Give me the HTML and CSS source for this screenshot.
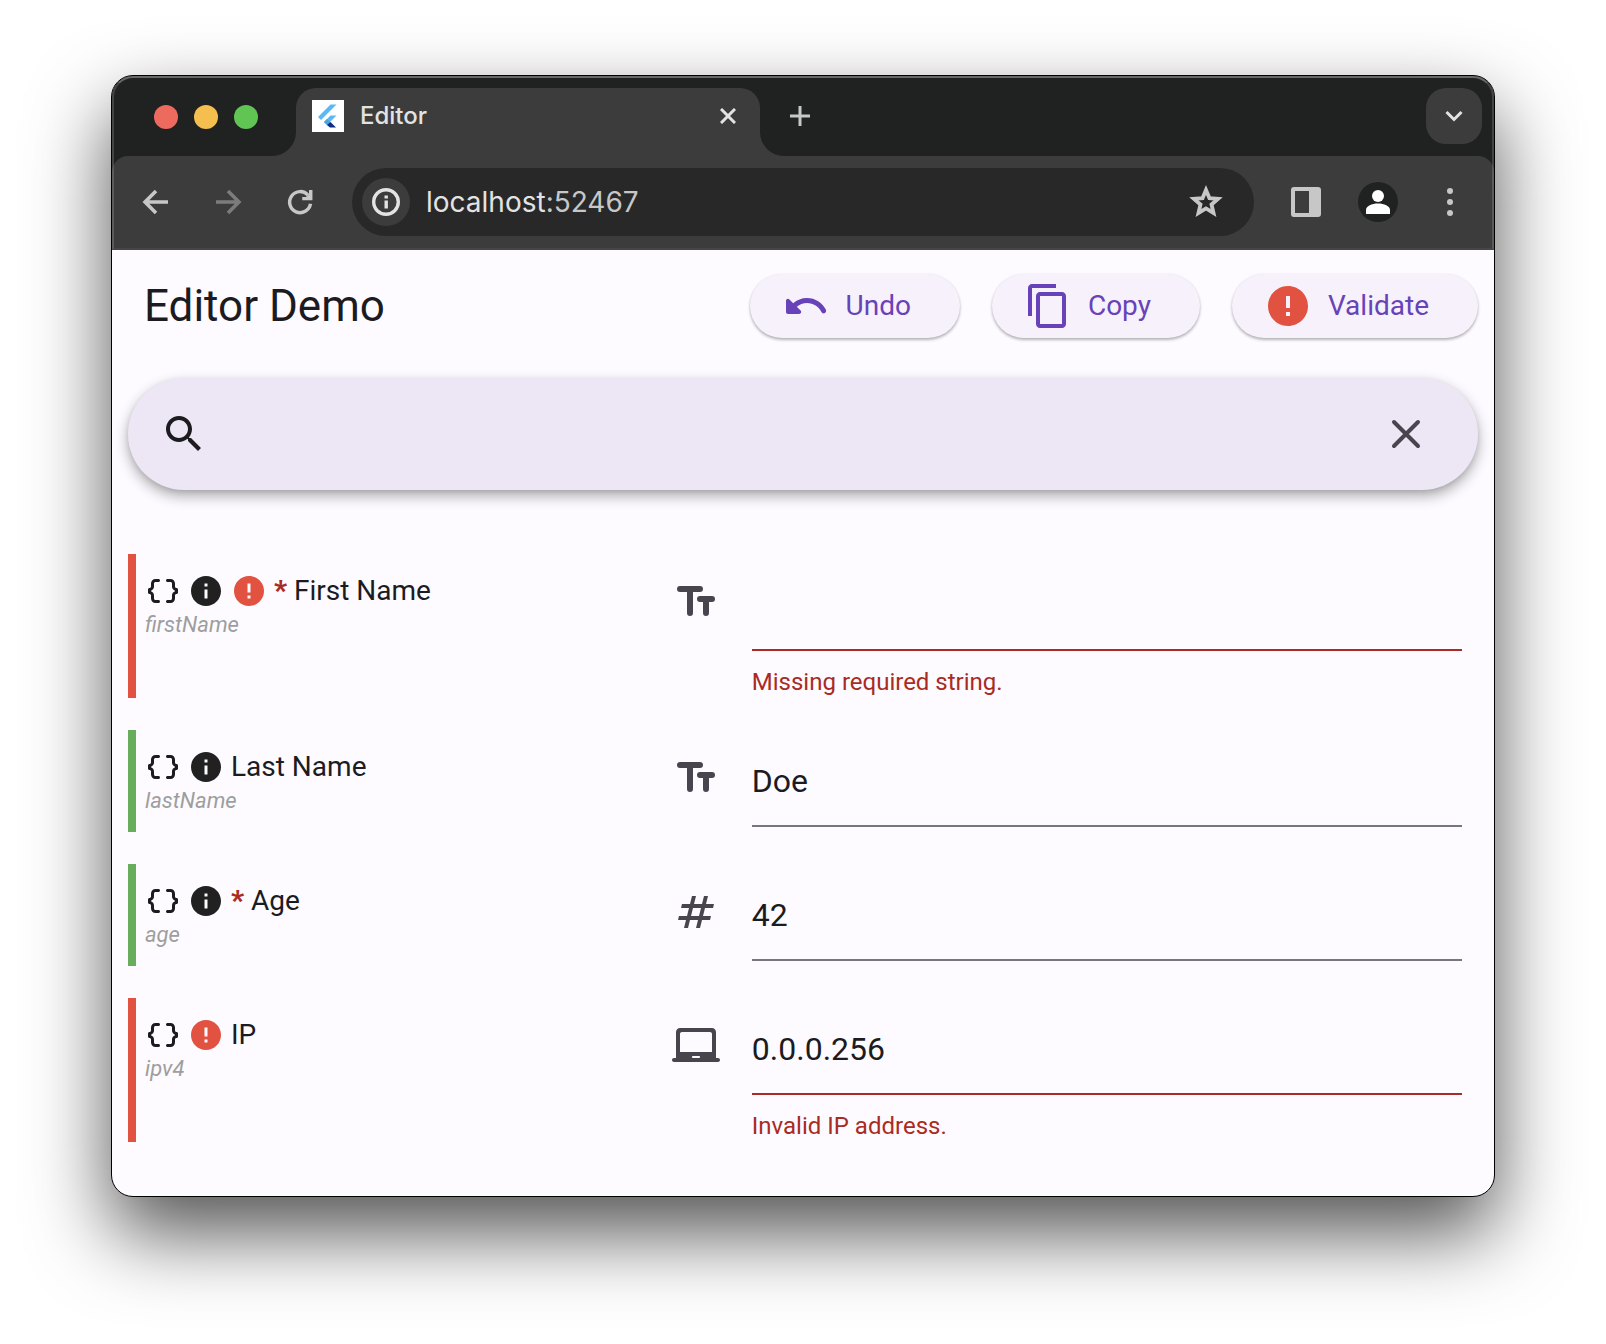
FILE: index.html
```html
<!DOCTYPE html>
<html lang="en">
<head>
<meta charset="utf-8">
<meta name="viewport" content="width=device-width, initial-scale=1">
<title>Editor</title>
<link rel="stylesheet" href="styles.css">
</head>
<body>
<svg class="sprite" aria-hidden="true">
  <symbol id="braces" viewBox="0 0 24 24"><path id="brace" fill="currentColor" d="M4 7v2c0 .55-.45 1-1 1s-1 .45-1 1v2c0 .55.45 1 1 1s1 .45 1 1v2c0 1.650 1.350 3 3 3h2c.55 0 1-.45 1-1s-.45-1-1-1H7c-.55 0-1-.45-1-1v-2c0-1.300-.84-2.420-2-2.830v-.34C5.160 11.420 6 10.300 6 9V7c0-.55.45-1 1-1h2c.55 0 1-.45 1-1s-.45-1-1-1H7C5.350 4 4 5.350 4 7z"/><use href="#brace" transform="matrix(-1 0 0 1 24 0)"/></symbol>
  <symbol id="info" viewBox="0 0 24 24"><path fill="currentColor" d="M12 2C6.480 2 2 6.480 2 12s4.480 10 10 10 10-4.480 10-10S17.520 2 12 2zm1 15h-2v-6h2v6zm0-8h-2V7h2v2z"/></symbol>
  <symbol id="error" viewBox="0 0 24 24"><path fill="currentColor" d="M12 2C6.480 2 2 6.480 2 12s4.480 10 10 10 10-4.480 10-10S17.520 2 12 2zm1 15h-2v-2h2v2zm0-4h-2V7h2v6z"/></symbol>
  <symbol id="text" viewBox="0 0 24 24"><path d="M4 5.500h10M9 5.500v12M14 10.500h6M17 10.500v7" fill="none" stroke="currentColor" stroke-width="3" stroke-linecap="round"/></symbol>
</svg>

<div class="window">
  <header class="chrome">
    <div class="tabstrip">
      <div class="lights"><span class="light light-close"></span><span class="light light-min"></span><span class="light light-max"></span></div>
      <div class="tab-cell">
        <div class="tab">
          <svg class="favicon" viewBox="0 0 32 32"><path fill="#fff" d="M0 0h32v32H0z"/><path fill="#5cb8f5" d="M6 17 18.500 4.500H24.500L9 20z"/><path fill="#5cb8f5" d="M18.500 15.500H24.500L15 25 12 22z"/><path fill="#43a5e8" d="M12 22l3-3 3.500 3.500-3 3z"/><path fill="#0b2f85" d="M15 25l3.500-3L24 27.500h-6z"/></svg>
          <span class="tab-title">Editor</span>
          <button class="icon-btn tab-close" aria-label="Close tab"><svg width="16" height="16" viewBox="0 0 16 16"><path d="M1 1l14 14M15 1 1 15" stroke="currentColor" stroke-width="3"/></svg></button>
        </div>
      </div>
      <div class="strip-rest">
        <button class="icon-btn" aria-label="New tab"><svg width="20" height="20" viewBox="0 0 20 20"><path d="M10 0v20M0 10h20" stroke="currentColor" stroke-width="3"/></svg></button>
        <button class="icon-btn tab-search" aria-label="Search tabs"><svg width="18" height="12" viewBox="0 0 18 12"><path d="M1.500 2 9 9.500 16.500 2" fill="none" stroke="currentColor" stroke-width="3"/></svg></button>
      </div>
    </div>
    <div class="toolbar">
      <nav class="nav">
        <button class="icon-btn" aria-label="Back"><svg width="36" height="36" viewBox="0 0 24 24"><path d="M20 12H5.500M12 4.700 4.700 12l7.300 7.300" fill="none" stroke="currentColor" stroke-width="2.400"/></svg></button>
        <button class="icon-btn" aria-label="Forward" disabled><svg width="36" height="36" viewBox="0 0 24 24"><path d="M4 12h14.500M12 4.700l7.300 7.300-7.300 7.300" fill="none" stroke="currentColor" stroke-width="2.400"/></svg></button>
        <button class="icon-btn" aria-label="Reload"><svg width="36" height="36" viewBox="0 0 24 24"><path d="M19 13.200A7 7 0 1 1 17.400 7.500" fill="none" stroke="currentColor" stroke-width="2.300"/><path fill="currentColor" d="M18 4h2.300v6.800h-6.800V8.600h2.400L18 7z"/></svg></button>
      </nav>
      <div class="omnibox">
        <button class="icon-btn site-info" aria-label="Site information"><svg width="28" height="28" viewBox="0 0 28 28"><circle cx="14" cy="14" r="12.300" fill="none" stroke="currentColor" stroke-width="3.400"/><path fill="currentColor" d="M12.500 12.500h3.400v8h-3.400zM12.500 7.500h3.400v3h-3.400z"/></svg></button>
        <span class="url">localhost<span class="port">:52467</span></span>
        <button class="icon-btn" aria-label="Bookmark this tab"><svg width="40" height="40" viewBox="0 0 24 24"><path fill="none" stroke="currentColor" stroke-width="2.300" d="M12 4.800l2.060 4.860 5.190.44-3.940 3.410 1.190 5.050L12 15.870l-4.500 2.690 1.190-5.050L4.750 10.100l5.190-.44z"/></svg></button>
      </div>
      <button class="icon-btn" aria-label="Side panel"><svg width="36" height="36" viewBox="0 0 36 36"><path fill="currentColor" fill-rule="evenodd" d="M6 3h24a3 3 0 0 1 3 3v24a3 3 0 0 1-3 3H6a3 3 0 0 1-3-3V6a3 3 0 0 1 3-3zM7 7v22h14V7z"/></svg></button>
      <button class="icon-btn avatar" aria-label="Profile"><svg width="40" height="40" viewBox="0 0 40 40"><circle cx="20" cy="14" r="6" fill="#fff"/><path fill="#fff" d="M8 32v-4c0-4 6-6.500 12-6.500S32 24 32 28v4z"/></svg></button>
      <button class="icon-btn" aria-label="Menu"><svg width="36" height="36" viewBox="0 0 36 36"><g fill="currentColor"><circle cx="18" cy="7" r="3"/><circle cx="18" cy="18" r="3"/><circle cx="18" cy="29" r="3"/></g></svg></button>
    </div>
  </header>

  <main class="app">
    <div class="appbar">
      <h1>Editor Demo</h1>
      <div class="actions">
        <button class="action"><svg width="48" height="48" viewBox="0 0 24 24"><path fill="currentColor" d="M12.500 8c-2.650 0-5.050.99-6.900 2.600L3.710 8.710C3.080 8.080 2 8.520 2 9.410V15c0 .55.45 1 1 1h5.590c.89 0 1.340-1.080.71-1.710l-1.910-1.910c1.390-1.160 3.160-1.880 5.120-1.880 3.160 0 5.890 1.840 7.190 4.500.27.56.91.84 1.500.64.71-.23 1.070-1.040.75-1.720C20.230 10.420 16.650 8 12.500 8z"/></svg>Undo</button>
        <button class="action"><svg width="48" height="48" viewBox="0 0 24 24"><path fill="currentColor" d="M16 1H4c-1.100 0-2 .9-2 2v14h2V3h12V1zm3 4H8c-1.100 0-2 .9-2 2v14c0 1.100.9 2 2 2h11c1.100 0 2-.9 2-2V7c0-1.100-.9-2-2-2zm0 16H8V7h11v14z"/></svg>Copy</button>
        <button class="action"><svg class="bad" width="48" height="48"><use href="#error"/></svg>Validate</button>
      </div>
    </div>

    <div class="search" role="search">
      <svg width="48" height="48" viewBox="0 0 24 24"><path fill="currentColor" d="M15.500 14h-.79l-.28-.27C15.410 12.590 16 11.110 16 9.500 16 5.910 13.090 3 9.500 3S3 5.910 3 9.500 5.910 16 9.500 16c1.610 0 3.090-.59 4.230-1.570l.27.28v.79l5 4.990L20.490 19l-4.990-5zm-6 0C7.010 14 5 11.990 5 9.500S7.010 5 9.500 5 14 7.010 14 9.500 11.990 14 9.500 14z"/></svg>
      <input type="text" aria-label="Search">
      <button class="icon-btn clear" aria-label="Clear search"><svg width="48" height="48" viewBox="0 0 24 24"><path d="M6 6l12 12M18 6 6 18" stroke="currentColor" stroke-width="2" stroke-linecap="round"/></svg></button>
    </div>

    <form class="fields">
      <div class="row invalid">
        <div class="info">
          <div class="name"><svg><use href="#braces"/></svg><svg class="dark"><use href="#info"/></svg><svg class="bad"><use href="#error"/></svg><b>*</b><label for="firstName">First Name</label></div>
          <div class="key">firstName</div>
        </div>
        <div class="editor">
          <svg width="48" height="48"><use href="#text"/></svg>
          <div class="field"><input id="firstName" type="text" aria-invalid="true" aria-describedby="firstName-error"><p id="firstName-error">Missing required string.</p></div>
        </div>
      </div>
      <div class="row">
        <div class="info">
          <div class="name"><svg><use href="#braces"/></svg><svg class="dark"><use href="#info"/></svg><label for="lastName">Last Name</label></div>
          <div class="key">lastName</div>
        </div>
        <div class="editor">
          <svg width="48" height="48"><use href="#text"/></svg>
          <div class="field"><input id="lastName" type="text" value="Doe"></div>
        </div>
      </div>
      <div class="row">
        <div class="info">
          <div class="name"><svg><use href="#braces"/></svg><svg class="dark"><use href="#info"/></svg><b>*</b><label for="age">Age</label></div>
          <div class="key">age</div>
        </div>
        <div class="editor">
          <svg width="48" height="48" viewBox="0 0 24 24"><path fill="currentColor" d="M20.500 10L21 8h-4l1-4h-2l-1 4h-4l1-4h-2L9 8H5l-.5 2h4l-1 4h-4L3 16h4l-1 4h2l1-4h4l-1 4h2l1-4h4l.5-2h-4l1-4h4zm-7 4h-4l1-4h4l-1 4z"/></svg>
          <div class="field"><input id="age" type="text" inputmode="numeric" value="42"></div>
        </div>
      </div>
      <div class="row invalid">
        <div class="info">
          <div class="name"><svg><use href="#braces"/></svg><svg class="bad"><use href="#error"/></svg><label for="ipv4">IP</label></div>
          <div class="key">ipv4</div>
        </div>
        <div class="editor">
          <svg width="48" height="48" viewBox="0 0 24 24"><path fill="currentColor" d="M23 18h-1V5c0-1.100-.9-2-2-2H4c-1.100 0-2 .9-2 2v13H1c-.55 0-1 .45-1 1s.45 1 1 1h22c.55 0 1-.45 1-1s-.45-1-1-1zm-9.500 0h-3c-.28 0-.5-.22-.5-.5s.22-.5.5-.5h3c.28 0 .5.22.5.5s-.22.5-.5.5zm6.500-3H4V6c0-.55.45-1 1-1h14c.55 0 1 .45 1 1v9z"/></svg>
          <div class="field"><input id="ipv4" type="text" value="0.0.0.256" aria-invalid="true" aria-describedby="ipv4-error"><p id="ipv4-error">Invalid IP address.</p></div>
        </div>
      </div>
    </form>
  </main>
</div>
</body>
</html>
```
FILE: styles.css
```css
* { box-sizing: border-box; }

body {
  margin: 0;
  padding: 75px 111px 147px;
  background: #fff;
  color: #1c1b1f;
  font-family: Roboto, "Liberation Sans", sans-serif;
}

svg { display: block; flex: none; }
.sprite { position: absolute; width: 0; height: 0; }

button, input { font: inherit; color: inherit; }
button { border: 0; padding: 0; background: none; }
input { border: 0; padding: 0; background: none; outline: none; min-width: 0; }

.window {
  border: 1px solid #000;
  border-radius: 22px;
  background: #fdfbff;
  box-shadow: 0 36px 80px rgba(0, 0, 0, .68);
}

/* Browser frame */
.chrome {
  position: relative;
  overflow: hidden;
  border-radius: 21px 21px 0 0;
  background: #202221;
  color: #c7c7c7;
  font-family: Inter, "Liberation Sans", sans-serif;
}
.chrome::after {
  content: "";
  position: absolute;
  inset: 0;
  border: 2px solid rgba(255, 255, 255, .16);
  border-top-color: rgba(255, 255, 255, .32);
  border-bottom-color: rgba(255, 255, 255, .06);
  border-radius: 21px 21px 0 0;
  pointer-events: none;
}

.icon-btn { display: flex; align-items: center; justify-content: center; flex: none; }

.tabstrip { display: flex; background: #3c3c3c; }
.lights {
  display: flex;
  align-items: flex-start;
  gap: 16px;
  width: 184px;
  padding: 29px 0 0 42px;
  border-bottom-right-radius: 24px;
  background: #202221;
}
.light { width: 24px; height: 24px; border-radius: 50%; }
.light-close { background: #ed6a5e; }
.light-min { background: #f5bf4f; }
.light-max { background: #61c554; }

.tab-cell { flex: 0 1 464px; padding-top: 12px; background: linear-gradient(#202221 50%, #3c3c3c 50%); }
.tab {
  display: flex;
  align-items: center;
  gap: 16px;
  height: 68px;
  padding: 0 24px 12px 16px;
  border-radius: 20px 20px 0 0;
  background: #3c3c3c;
}
.favicon { width: 32px; height: 32px; }
.tab-title { flex: 1; color: #e3e3e3; font-size: 24px; line-height: 32px; font-weight: 500; }
.tab-close { color: #e3e3e3; }

.strip-rest {
  flex: 1;
  display: flex;
  align-items: center;
  justify-content: space-between;
  padding: 12px 12px 12px 30px;
  border-bottom-left-radius: 24px;
  background: #202221;
}
.tab-search { width: 56px; height: 56px; border-radius: 20px; background: #3c3c3c; color: #e3e3e3; }

.toolbar {
  display: flex;
  align-items: center;
  gap: 34px;
  padding: 12px 26px 14px;
  border-radius: 16px 16px 0 0;
  background: #3c3c3c;
}
.nav { display: flex; gap: 36px; }
.nav button:disabled { color: #7c7c7c; }
.omnibox {
  flex: 1;
  display: flex;
  align-items: center;
  gap: 16px;
  height: 68px;
  padding: 0 28px 0 10px;
  border-radius: 34px;
  background: #282828;
}
.site-info { width: 48px; height: 48px; border-radius: 50%; background: #3c3c3c; color: #e3e3e3; }
.url { flex: 1; color: #e3e3e3; font-size: 28px; line-height: 36px; }
.port { color: #c7c7c7; }
.avatar { border-radius: 50%; background: #202221; }

/* Editor page */
.app { padding: 0 16px 54px; }
.appbar { display: flex; align-items: center; justify-content: space-between; padding: 24px 0 24px 16px; }
h1 { margin: 0; font-size: 44px; line-height: 56px; font-weight: 400; }
.actions { display: flex; gap: 32px; }
.action {
  display: flex;
  align-items: center;
  gap: 16px;
  height: 64px;
  padding: 0 49px 0 32px;
  border-radius: 32px;
  background: #f6f1fb;
  box-shadow: 0 2px 3px rgba(0, 0, 0, .28), 0 0 2px rgba(0, 0, 0, .08);
  color: #6842b8;
  font-size: 28px;
  line-height: 40px;
}
.bad { color: #e15241; }

.search {
  display: flex;
  align-items: center;
  height: 112px;
  margin-top: 16px;
  padding: 0 48px 0 32px;
  border-radius: 56px;
  background: #ece6f5;
  box-shadow: 0 6px 14px rgba(0, 0, 0, .32), 0 2px 5px rgba(0, 0, 0, .08);
}
.search input { flex: 1; padding: 0 16px; font-size: 32px; line-height: 48px; }
.clear { color: #49454f; }

.fields { display: flex; flex-direction: column; gap: 32px; margin-top: 64px; }
.row {
  display: grid;
  grid-template-columns: 2fr 3fr;
  min-height: 102px;
  padding: 0 16px 0 9px;
  border-left: 8px solid #67ad5b;
}
.row.invalid { border-left-color: #e15241; }

.info { padding-top: 16px; }
.name { display: flex; align-items: center; gap: 7px; font-size: 28px; line-height: 41px; }
.name svg { width: 36px; height: 36px; }
.name b { color: #a92b23; font-weight: 900; }
.dark { color: #212121; }
.key { color: #9e9e9e; font-size: 22px; line-height: 28px; font-style: italic; }

.editor { display: flex; gap: 32px; color: #49454f; }
.editor > svg { margin-top: 24px; }
.field { flex: 1; min-width: 0; }
.field input {
  display: block;
  width: 100%;
  height: 97px;
  padding: 27px 0 20px;
  border-bottom: 2px solid #79747e;
  color: #1c1b1f;
  font-size: 32px;
  line-height: 48px;
}
.invalid .field input { border-bottom-color: #a92b23; }
.field p { margin: 15px 0 0; color: #a92b23; font-size: 24px; line-height: 32px; }
```
